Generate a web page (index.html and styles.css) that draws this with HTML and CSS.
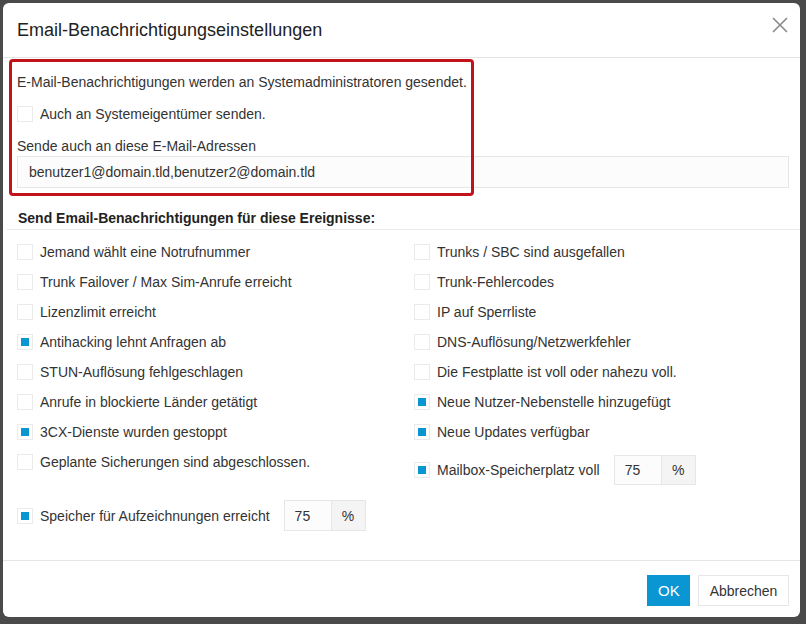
FILE: index.html
```html
<!DOCTYPE html>
<html lang="de">
<head>
<meta charset="utf-8">
<title>Email-Benachrichtigungseinstellungen</title>
<link rel="stylesheet" href="styles.css">
</head>
<body>
<div class="modal">
  <div class="modal-header">
    <h4 class="modal-title">Email-Benachrichtigungseinstellungen</h4>
    <button class="close" type="button" aria-label="Schließen">
      <svg width="16" height="16" viewBox="0 0 16 16"><path d="M1 1 L15 15 M15 1 L1 15" stroke="#8a8a8a" stroke-width="1.6" fill="none"/></svg>
    </button>
  </div>
  <div class="modal-body">
    <div class="highlight"></div>
    <p class="info">E-Mail-Benachrichtigungen werden an Systemadministratoren gesendet.</p>
    <label class="check top-check"><span class="box"></span><span>Auch an Systemeigentümer senden.</span></label>
    <div class="field-label">Sende auch an diese E-Mail-Adressen</div>
    <div class="text-input">benutzer1@domain.tld,benutzer2@domain.tld</div>

    <div class="section-title">Send Email-Benachrichtigungen für diese Ereignisse:</div>

    <div class="events">
      <div class="col">
        <label class="check row"><span class="box"></span><span>Jemand wählt eine Notrufnummer</span></label>
        <label class="check row"><span class="box"></span><span>Trunk Failover / Max Sim-Anrufe erreicht</span></label>
        <label class="check row"><span class="box"></span><span>Lizenzlimit erreicht</span></label>
        <label class="check row"><span class="box on"></span><span>Antihacking lehnt Anfragen ab</span></label>
        <label class="check row"><span class="box"></span><span>STUN-Auflösung fehlgeschlagen</span></label>
        <label class="check row"><span class="box"></span><span>Anrufe in blockierte Länder getätigt</span></label>
        <label class="check row"><span class="box on"></span><span>3CX-Dienste wurden gestoppt</span></label>
        <label class="check row"><span class="box"></span><span>Geplante Sicherungen sind abgeschlossen.</span></label>
        <div class="check row-input left-extra"><span class="box on"></span><span>Speicher für Aufzeichnungen erreicht</span>
          <div class="input-group"><span class="ig-value">75</span><span class="ig-addon">%</span></div>
        </div>
      </div>
      <div class="col">
        <label class="check row"><span class="box"></span><span>Trunks / SBC sind ausgefallen</span></label>
        <label class="check row"><span class="box"></span><span>Trunk-Fehlercodes</span></label>
        <label class="check row"><span class="box"></span><span>IP auf Sperrliste</span></label>
        <label class="check row"><span class="box"></span><span>DNS-Auflösung/Netzwerkfehler</span></label>
        <label class="check row"><span class="box"></span><span>Die Festplatte ist voll oder nahezu voll.</span></label>
        <label class="check row"><span class="box on"></span><span>Neue Nutzer-Nebenstelle hinzugefügt</span></label>
        <label class="check row"><span class="box on"></span><span>Neue Updates verfügbar</span></label>
        <div class="check row-input right-extra"><span class="box on"></span><span>Mailbox-Speicherplatz voll</span>
          <div class="input-group"><span class="ig-value">75</span><span class="ig-addon">%</span></div>
        </div>
      </div>
    </div>
  </div>
  <div class="modal-footer">
    <button class="btn btn-primary" type="button">OK</button>
    <button class="btn btn-default" type="button">Abbrechen</button>
  </div>
</div>
</body>
</html>
```
FILE: styles.css
```css
* { box-sizing: border-box; }
html, body { margin: 0; padding: 0; }
body {
  background: #4a4a4a;
  font-family: "Liberation Sans", Arial, sans-serif;
  font-size: 14px;
  color: #333;
  width: 806px;
  height: 624px;
  overflow: hidden;
  padding: 3px 6px 0 3px;
}
.modal {
  background: #fff;
  border-radius: 6px;
  width: 797px;
  height: 614px;
  display: flex;
  flex-direction: column;
  position: relative;
}
.modal-header {
  height: 55px;
  border-bottom: 1px solid #e5e5e5;
  display: flex;
  align-items: center;
  justify-content: space-between;
  padding: 0 10px 0 14px;
}
.modal-title {
  margin: 0;
  font-size: 18px;
  font-weight: normal;
  color: #222;
  padding-top: 1px;
}
.close {
  border: 0;
  background: none;
  padding: 0;
  width: 20px;
  height: 20px;
  display: flex;
  align-items: center;
  justify-content: center;
  margin-top: -10px;
}
.modal-body {
  position: relative;
  padding: 14px 11px 0 14px;
  flex: 1;
}
.highlight {
  position: absolute;
  left: 6px;
  top: 1px;
  width: 465px;
  height: 137px;
  border: 3px solid #c2121a;
  border-radius: 4px;
  pointer-events: none;
}
.info { margin: 0; line-height: 20px; }
.check {
  display: flex;
  align-items: center;
  gap: 7px;
  line-height: 20px;
}
.box {
  width: 16px;
  height: 16px;
  border: 1px solid #ebebeb;
  background: #fff;
  flex: none;
  position: relative;
}
.box.on::after {
  content: "";
  position: absolute;
  left: 3px;
  top: 3px;
  width: 8px;
  height: 8px;
  background: #0a96d2;
}
.top-check { margin-top: 12px; }
.field-label { margin-top: 12px; line-height: 20px; }
.text-input {
  height: 32px;
  border: 1px solid #e6e6e6;
  background: #fcfcfc;
  padding: 0 11px;
  line-height: 30px;
}
.section-title {
  margin: 20px -11px 0 -10px;
  padding: 0 11px 1px 11px;
  font-weight: bold;
  line-height: 20px;
  border-bottom: 1px solid #ebebeb;
  color: #222;
}
.events {
  display: grid;
  grid-template-columns: 397px 1fr;
  padding-top: 7px;
}
.row { height: 30px; }
.row-input { height: 31px; }
.left-extra { margin-top: 23px; }
.right-extra { margin-top: 8px; height: 30px; }
.input-group {
  display: flex;
  margin-left: 7px;
  height: 100%;
  border: 1px solid #e6e6e6;
}
.ig-value {
  width: 47px;
  padding-left: 10px;
  background: #fcfcfc;
  border-right: 1px solid #e6e6e6;
  display: flex;
  align-items: center;
}
.ig-addon {
  width: 33px;
  background: #f4f4f4;
  display: flex;
  align-items: center;
  justify-content: center;
}
.modal-footer {
  height: 57px;
  flex: none;
  border-top: 1px solid #e5e5e5;
  display: flex;
  justify-content: flex-end;
  align-items: flex-start;
  gap: 8px;
  padding: 14px 11px 0 0;
}
.btn {
  font-family: "Liberation Sans", Arial, sans-serif;
  font-size: 14px;
  height: 31px;
  padding: 0 10px;
  border-radius: 0;
  cursor: pointer;
}
.btn-primary {
  background: #0a96d2;
  color: #fff;
  border: 1px solid #0a96d2;
  width: 43px;
  font-size: 15px;
}
.btn-default {
  background: #fff;
  color: #333;
  border: 1px solid #e6e6e6;
  width: 91px;
}
```
